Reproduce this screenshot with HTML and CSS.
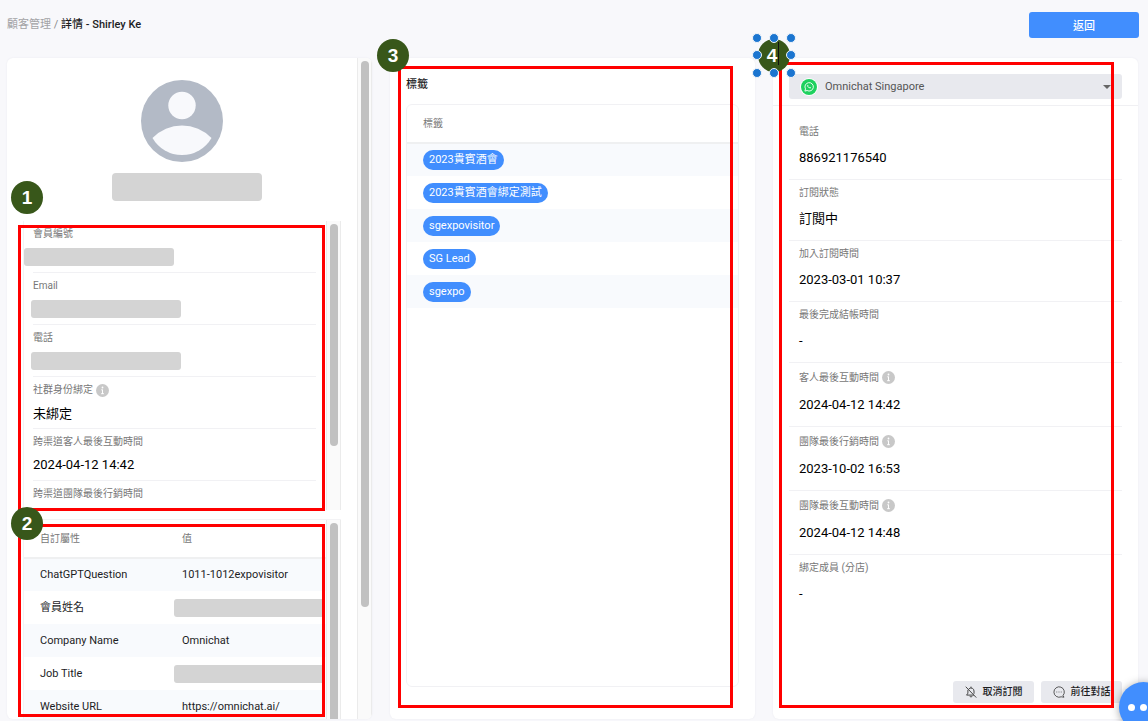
FILE: index.html
```html
<!DOCTYPE html>
<html lang="zh-Hant">
<head>
<meta charset="utf-8">
<meta name="viewport" content="width=device-width, initial-scale=1">
<title>顧客管理 / 詳情 - Shirley Ke</title>
<link rel="stylesheet" href="styles.css">
</head>
<body>
<svg class="sprite" aria-hidden="true">
  <symbol id="info" viewBox="0 0 13 13">
    <circle cx="6.5" cy="6.5" r="6.5" fill="#c8c8c8"/>
    <path d="M6.500 5.500V10M5.300 5.800h1M5.100 9.700h2.800" fill="none" stroke="#fff" stroke-width="1"/>
    <circle cx="6.500" cy="3.500" r="0.9" fill="#fff"/>
  </symbol>
</svg>

<header class="topbar">
  <nav class="crumbs"><a href="#">顧客管理</a> <span class="slash">/</span> <h1>詳情 - Shirley Ke</h1></nav>
  <button class="back" type="button">返回</button>
</header>

<main class="columns">
  <section class="column">
    <div class="scroller profile">
      <div class="profile-body">
        <svg class="avatar" viewBox="0 0 82 82" role="img" aria-label="avatar">
          <circle cx="41" cy="41" r="41" fill="#b3bac6"/>
          <circle cx="41" cy="25.5" r="13.7" fill="#f8f9fc"/>
          <path d="M11.5 58A41 41 0 0 1 70.5 58A34 34 0 0 1 11.5 58Z" fill="#f8f9fc"/>
        </svg>
        <div class="mask mask-name"></div>

        <div class="scroller facts-card">
          <dl class="facts">
            <div><dt>會員編號</dt><dd><span class="mask mask-first"></span></dd></div>
            <div><dt>Email</dt><dd><span class="mask"></span></dd></div>
            <div><dt>電話</dt><dd><span class="mask"></span></dd></div>
            <div class="with-info"><dt>社群身份綁定 <svg class="info"><use href="#info"/></svg></dt><dd>未綁定</dd></div>
            <div><dt>跨渠道客人最後互動時間</dt><dd>2024-04-12 14:42</dd></div>
            <div><dt>跨渠道團隊最後行銷時間</dt><dd></dd></div>
          </dl>
          <div class="track"><div class="thumb thumb-facts"></div></div>
        </div>

        <div class="scroller attr-card">
          <table class="grid attrs">
            <thead><tr><th>自訂屬性</th><th>值</th></tr></thead>
            <tbody>
              <tr><td>ChatGPTQuestion</td><td>1011-1012expovisitor</td></tr>
              <tr><td>會員姓名</td><td><div class="mask mask-cell"></div></td></tr>
              <tr><td>Company Name</td><td>Omnichat</td></tr>
              <tr><td>Job Title</td><td><div class="mask mask-cell"></div></td></tr>
              <tr><td>Website URL</td><td>https://omnichat.ai/</td></tr>
            </tbody>
          </table>
          <div class="track"><div class="thumb thumb-attrs"></div></div>
        </div>
      </div>
      <div class="track"><div class="thumb thumb-profile"></div></div>
    </div>
    <div class="frame frame-1"></div>
    <div class="frame frame-2"></div>
    <div class="badge badge-1">1</div>
    <div class="badge badge-2">2</div>
  </section>

  <section class="column">
    <div class="panel tags">
      <h2>標籤</h2>
      <div class="tag-card">
        <table class="grid">
          <thead><tr><th>標籤</th></tr></thead>
          <tbody>
            <tr><td><span class="tag">2023貴賓酒會</span></td></tr>
            <tr><td><span class="tag">2023貴賓酒會綁定測試</span></td></tr>
            <tr><td><span class="tag">sgexpovisitor</span></td></tr>
            <tr><td><span class="tag">SG Lead</span></td></tr>
            <tr><td><span class="tag">sgexpo</span></td></tr>
          </tbody>
        </table>
      </div>
    </div>
    <div class="frame frame-3"></div>
    <div class="badge badge-3">3</div>
  </section>

  <section class="column">
    <div class="panel channel">
      <div class="channel-head">
        <div class="picker">
          <svg class="whatsapp" viewBox="0 0 18 18" aria-hidden="true">
            <circle cx="9" cy="9" r="9" fill="#fff"/>
            <circle cx="9" cy="9" r="8" fill="#1fd15f"/>
            <path d="M4.9 13.1l.6-2.2a4.2 4.2 0 1 1 1.6 1.6z" fill="none" stroke="#fff" stroke-width="0.9" stroke-linejoin="round"/>
            <path d="M7.6 6.9c-.6.5-.4 1.4.5 2.4 1 1 2.1 1.500 2.700.8l.1-.5-.9-.5-.5.4c-.7-.3-1.100-.7-1.400-1.300l.3-.5-.4-.9z" fill="#fff"/>
          </svg>
          <select aria-label="渠道"><option>Omnichat Singapore</option></select>
          <svg class="caret" viewBox="0 0 8 4" aria-hidden="true"><path d="M0 0h8L4 4z" fill="#666"/></svg>
        </div>
      </div>
      <dl class="facts details">
        <div><dt>電話</dt><dd>886921176540</dd></div>
        <div><dt>訂閱狀態</dt><dd>訂閱中</dd></div>
        <div><dt>加入訂閱時間</dt><dd>2023-03-01 10:37</dd></div>
        <div><dt>最後完成結帳時間</dt><dd>-</dd></div>
        <div class="with-info"><dt>客人最後互動時間 <svg class="info"><use href="#info"/></svg></dt><dd>2024-04-12 14:42</dd></div>
        <div class="with-info"><dt>團隊最後行銷時間 <svg class="info"><use href="#info"/></svg></dt><dd>2023-10-02 16:53</dd></div>
        <div class="with-info"><dt>團隊最後互動時間 <svg class="info"><use href="#info"/></svg></dt><dd>2024-04-12 14:48</dd></div>
        <div><dt>綁定成員 (分店)</dt><dd>-</dd></div>
      </dl>
      <div class="actions">
        <button type="button">
          <svg viewBox="0 0 12 12" aria-hidden="true" fill="none" stroke="#333" stroke-width="0.9" stroke-linecap="round" stroke-linejoin="round"><path d="M1 1l10 10.300M4.200 2.600A3 3 0 0 1 9 5v2.400M2.900 4.300V7.200L1.600 9.100H8.600M6 1.600V1M5 10.400a1.100 1.100 0 0 0 2 0"/></svg>
          取消訂閱
        </button>
        <button type="button">
          <svg viewBox="0 0 12 12" aria-hidden="true" fill="none" stroke="#333" stroke-width="0.8" stroke-linejoin="round"><path d="M10 9.500A5.200 5.200 0 1 0 8.200 10.800L11 11.200Z"/><path d="M3.400 6h.8M5.600 6h.8M7.800 6h.8"/></svg>
          前往對話
        </button>
      </div>
    </div>
    <div class="frame frame-4"></div>
    <div class="badge badge-4">4
      <span class="cursor"></span>
      <i class="dot l t"></i><i class="dot c t"></i><i class="dot r t"></i>
      <i class="dot l m"></i><i class="dot r m"></i>
      <i class="dot l b"></i><i class="dot c b"></i><i class="dot r b"></i>
    </div>
  </section>
</main>

<button class="chat" type="button" aria-label="chat"><i></i><i></i><i></i></button>
</body>
</html>
```
FILE: styles.css
```css
* { box-sizing: border-box; }

body {
  margin: 0;
  height: 100vh;
  overflow: hidden;
  display: flex;
  flex-direction: column;
  background: #f8f8fb;
  color: #1d1d1f;
  font: 11px/16px Roboto, "Noto Sans CJK TC", sans-serif;
}

h1, h2, dl, dd { margin: 0; }
button, select { font: inherit; color: inherit; border: 0; }
.sprite { position: absolute; width: 0; height: 0; }

/* Top bar */
.topbar {
  display: flex;
  justify-content: space-between;
  align-items: center;
  padding: 12px 9px 20px 7px;
}
.crumbs { color: #a3a3a6; }
.crumbs a { color: inherit; text-decoration: none; }
.crumbs h1 { display: inline; font-size: 11px; font-weight: 500; color: #1d1d1f; }
.slash { color: #8a8a8d; }
.back {
  width: 110px;
  height: 26px;
  padding: 3px 0 0;
  border-radius: 3px;
  background: #418efe;
  color: #fff;
  font-weight: 500;
}

/* Columns */
.columns {
  flex: 1;
  min-height: 0;
  display: grid;
  grid-template-columns: repeat(3, 1fr);
  gap: 18px;
  padding: 0 10px 2px 7px;
}
.column { position: relative; min-width: 0; min-height: 0; }
.panel, .profile {
  height: 100%;
  background: #fff;
  border-radius: 6px;
  overflow: hidden;
  box-shadow: 0 0 2px #e9e9ef;
}
.panel { display: flex; flex-direction: column; }

/* Scroll areas */
.scroller { display: flex; overflow: hidden; }
.scroller > :first-child { flex: 1; min-width: 0; }
.track {
  width: 15px;
  flex: none;
  padding: 3px;
  background: #fafafa;
  border: solid #ebebeb;
  border-width: 0 1px;
}
.thumb { width: 8px; border-radius: 4px; background: #c1c1c1; }
.thumb-profile { height: 546px; }
.thumb-facts { height: 222px; }
.thumb-attrs { height: 300px; }

/* Profile */
.profile-body {
  display: flex;
  flex-direction: column;
  padding: 22px 16px 0;
}
.avatar { width: 82px; height: 82px; align-self: center; flex: none; }
.mask {
  display: block;
  width: 150px;
  height: 18px;
  margin-left: -2px;
  border-radius: 3px;
  background: #d4d4d4;
}
.mask-name { flex: none; height: 28px; margin: 11px 0 20px 10px; align-self: center; border-radius: 4px; }
.mask-first { margin-left: -9px; }
.mask-cell { width: auto; margin: 0 4px 0 -8px; border-radius: 3px 0 0 3px; }
.facts-card { flex: none; height: 289px; border: solid #f3f3f5; border-width: 0 0 0 1px; }
.attr-card { flex: 1; min-height: 0; margin-top: 9px; border: solid #f3f3f5; border-width: 1px 0 0 1px; }

.facts { padding: 0 10px 0 9px; }
.facts > div { padding: 6px 0 5px; border-bottom: 1px solid #f1f1f4; }
.facts dt {
  display: flex;
  align-items: center;
  gap: 3px;
  height: 14px;
  margin-bottom: 6px;
  font-size: 10px;
  color: #777;
}
.facts dd { display: flex; align-items: center; height: 20px; font-size: 13px; color: #000; }
.facts-card .with-info { padding: 5px 0 4px; }
.with-info dt { height: 16px; }
.info { width: 13px; height: 13px; }

/* Tables */
.grid { width: 100%; border-collapse: collapse; align-self: flex-start; }
.grid th {
  height: 38px;
  padding: 0 0 0 16px;
  border-bottom: 2px solid #eff0f1;
  text-align: left;
  font-size: 10px;
  font-weight: 400;
  color: #777;
}
.grid td { height: 33px; padding: 0 0 0 16px; }
.grid tbody tr:nth-child(odd) { background: #f8fafd; }
.attrs { table-layout: fixed; }
.attrs th:first-child { width: 142px; }

/* Tags */
.tags { padding: 18px 16px 32px; }
.tags h2 { margin-bottom: 11px; font-size: 11px; line-height: 17px; font-weight: 500; }
.tag-card { flex: 1; border: 1px solid #f1f1f4; border-radius: 6px; }
.tag {
  display: inline-block;
  padding: 0 6px;
  border-radius: 10px;
  background: #418efe;
  color: #fff;
  line-height: 20px;
  vertical-align: middle;
}

/* Channel */
.channel-head { padding: 16px 16px 6px; border-bottom: 1px solid #f0f0f3; }
.picker {
  display: flex;
  align-items: center;
  gap: 7px;
  height: 25px;
  padding: 0 11px;
  border-radius: 3px;
  background: #e8e9ee;
}
.picker select { flex: 1; appearance: none; padding: 0; background: none; color: #555; }
.whatsapp { width: 18px; height: 18px; }
.caret { width: 8px; height: 4px; }
.details { flex: 1; padding: 13px 16px 0; }
.details > div { padding: 6px 10px 11px; }
.details > div:last-child { border-bottom: 0; }
.details dt { margin-bottom: 9px; }
.details .with-info dt { height: 17px; }
.actions { display: flex; justify-content: flex-end; gap: 7px; padding: 0 16px 16px; }
.actions button {
  display: flex;
  align-items: center;
  justify-content: center;
  gap: 6px;
  width: 81px;
  height: 22px;
  padding: 0;
  border-radius: 3px;
  background: #e8e9ee;
  font-size: 10px;
  font-weight: 500;
}
.actions svg { width: 12px; height: 12px; }

/* Annotations drawn over the page */
.frame { position: absolute; border: 3px solid #f00; }
.frame-1 { left: 11px; right: 47px; top: 167px; height: 286px; }
.frame-2 { left: 11px; right: 47px; top: 466px; bottom: 2px; }
.frame-3 { left: 8px; right: 22px; top: 8px; bottom: 11px; }
.frame-4 { left: 6px; right: 24px; top: 4px; bottom: 11px; }
.badge {
  position: absolute;
  width: 32px;
  height: 33px;
  border-radius: 50%;
  background: #38571a;
  color: #fff;
  font: bold 19px/33px "Liberation Sans", sans-serif;
  text-align: center;
}
.badge-1 { left: 4px; top: 123px; }
.badge-2 { left: 4px; top: 449px; }
.badge-3 { left: -13px; top: -19px; }
.badge-4 { left: -15px; top: -19px; padding-right: 4px; }
.cursor { position: absolute; left: 20px; top: 3px; width: 1px; height: 23px; background: #111; }
.dot {
  position: absolute;
  width: 10px;
  height: 10px;
  border: 1px solid #f1f5fa;
  border-radius: 50%;
  background: #1b75d0;
}
.l { left: -6px; }
.c { left: 11px; }
.r { left: 28px; }
.t { top: -6px; }
.m { top: 11px; }
.b { top: 29px; }

.chat {
  position: fixed;
  right: -20px;
  bottom: -11px;
  display: flex;
  align-items: center;
  justify-content: center;
  gap: 5px;
  width: 49px;
  height: 50px;
  padding: 0;
  border-radius: 50%;
  background: #418efe;
  box-shadow: 0 1px 8px rgba(0, 0, 0, 0.35);
}
.chat i { flex: none; width: 7px; height: 7px; border-radius: 50%; background: #fff; }
```
